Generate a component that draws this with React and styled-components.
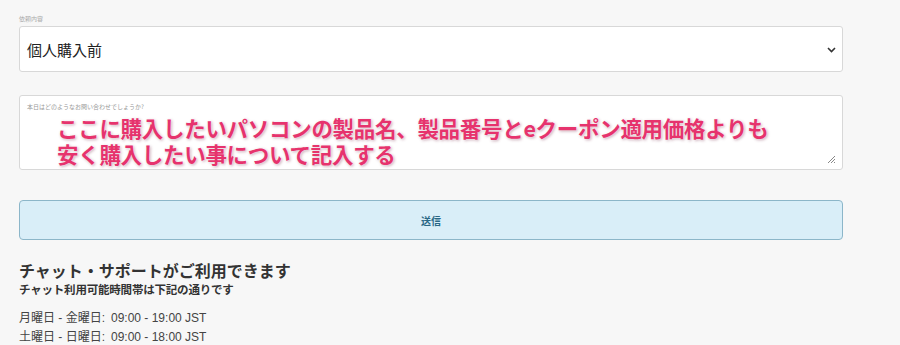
import React from 'react';
import styled, { createGlobalStyle } from 'styled-components';

// ─────────────────────────────────────────────────────────────────────────────
// Global
// ─────────────────────────────────────────────────────────────────────────────

const GlobalStyle = createGlobalStyle`
  html, body {
    margin: 0;
    padding: 0;
    background: #f7f7f7;
    font-family: "Noto Sans CJK JP", "Liberation Sans", sans-serif;
    color: #333;
  }
`;

// ─────────────────────────────────────────────────────────────────────────────
// Component
// ─────────────────────────────────────────────────────────────────────────────

const hours = [
  { days: '月曜日 - 金曜日:', time: '09:00 - 19:00 JST' },
  { days: '土曜日 - 日曜日:', time: '09:00 - 18:00 JST' },
];

const noteLines = [
  'ここに購入したいパソコンの製品名、製品番号とeクーポン適用価格よりも',
  '安く購入したい事について記入する',
];

const App = () => (
  <>
    <GlobalStyle />
    <Page>
      <Field>
        <TinyLabel>依頼内容</TinyLabel>
        <Select>
          <span>個人購入前</span>
          <svg width="9" height="6" viewBox="0 0 9 6">
            <path d="M1 1l3.5 3.5L8 1" fill="none" stroke="#333" strokeWidth="1.6" />
          </svg>
        </Select>
      </Field>

      <TextBox>
        <Placeholder>本日はどのようなお問い合わせでしょうか?</Placeholder>
        <Note>
          {noteLines.map((line) => (
            <NoteLine key={line}>{line}</NoteLine>
          ))}
        </Note>
        <Grip width="10" height="10" viewBox="0 0 10 10">
          <path d="M9 2L2 9M9 5L5 9M9 8L8 9" stroke="#888" strokeWidth="1" />
        </Grip>
      </TextBox>

      <Submit>送信</Submit>

      <Chat>
        <Heading>チャット・サポートがご利用できます</Heading>
        <SubHeading>チャット利用可能時間帯は下記の通りです</SubHeading>
        <Hours>
          {hours.map(({ days, time }) => (
            <HourRow key={days}>
              <span>{days}</span>
              <span>{time}</span>
            </HourRow>
          ))}
        </Hours>
      </Chat>
    </Page>
  </>
);

// ─────────────────────────────────────────────────────────────────────────────
// Styles
// ─────────────────────────────────────────────────────────────────────────────

const Page = styled.div`
  width: 824px;
  padding: 15px 0 0 19px;
  display: flex;
  flex-direction: column;
`;

const Field = styled.div`
  display: flex;
  flex-direction: column;
  gap: 3px;
`;

const TinyLabel = styled.div`
  font-size: 6px;
  line-height: 8px;
  color: #aaa;
`;

const Select = styled.div`
  box-sizing: border-box;
  height: 46px;
  background: #fff;
  border: 1px solid #d8d8d8;
  border-radius: 3px;
  display: flex;
  align-items: center;
  justify-content: space-between;
  padding: 0 6px 0 7px;
  font-size: 15px;
  color: #222;
  svg {
    margin-top: 2px;
  }
`;

const TextBox = styled.div`
  position: relative;
  box-sizing: border-box;
  margin-top: 23px;
  height: 75px;
  background: #fff;
  border: 1px solid #d8d8d8;
  border-radius: 3px;
  padding: 7px 7px 0;
`;

const Placeholder = styled.div`
  font-size: 6px;
  line-height: 8px;
  color: #999;
`;

const Note = styled.div`
  margin: 4px 0 0 30px;
  display: flex;
  flex-direction: column;
`;

const NoteLine = styled.div`
  height: 26px;
  font-size: 21.5px;
  line-height: 26px;
  font-weight: 700;
  color: #e6336d;
  letter-spacing: -0.3px;
  white-space: nowrap;
  text-shadow: 0 0 2px #fff, 1px 1px 3px rgba(120, 40, 70, 0.45), 0 0 5px #fff;
`;

const Grip = styled.svg`
  position: absolute;
  right: 6px;
  bottom: 5px;
`;

const Submit = styled.div`
  box-sizing: border-box;
  margin-top: 30px;
  height: 40px;
  background: #d9eef8;
  border: 1px solid #8cb6c9;
  border-radius: 4px;
  display: flex;
  align-items: center;
  justify-content: center;
  font-size: 10px;
  font-weight: 700;
  color: #2a6886;
`;

const Chat = styled.div`
  margin-top: 19px;
  display: flex;
  flex-direction: column;
`;

const Heading = styled.div`
  font-size: 16px;
  line-height: 22px;
  font-weight: 700;
  color: #333;
`;

const SubHeading = styled.div`
  font-size: 11.5px;
  line-height: 16px;
  font-weight: 700;
  letter-spacing: -0.2px;
  color: #333;
`;

const Hours = styled.div`
  margin-top: 12px;
  display: flex;
  flex-direction: column;
`;

const HourRow = styled.div`
  display: flex;
  gap: 6px;
  font-family: "Liberation Sans", "Noto Sans CJK JP", sans-serif;
  font-size: 12px;
  line-height: 19px;
  color: #444;
`;

App.displayName = 'App';

export default App;
